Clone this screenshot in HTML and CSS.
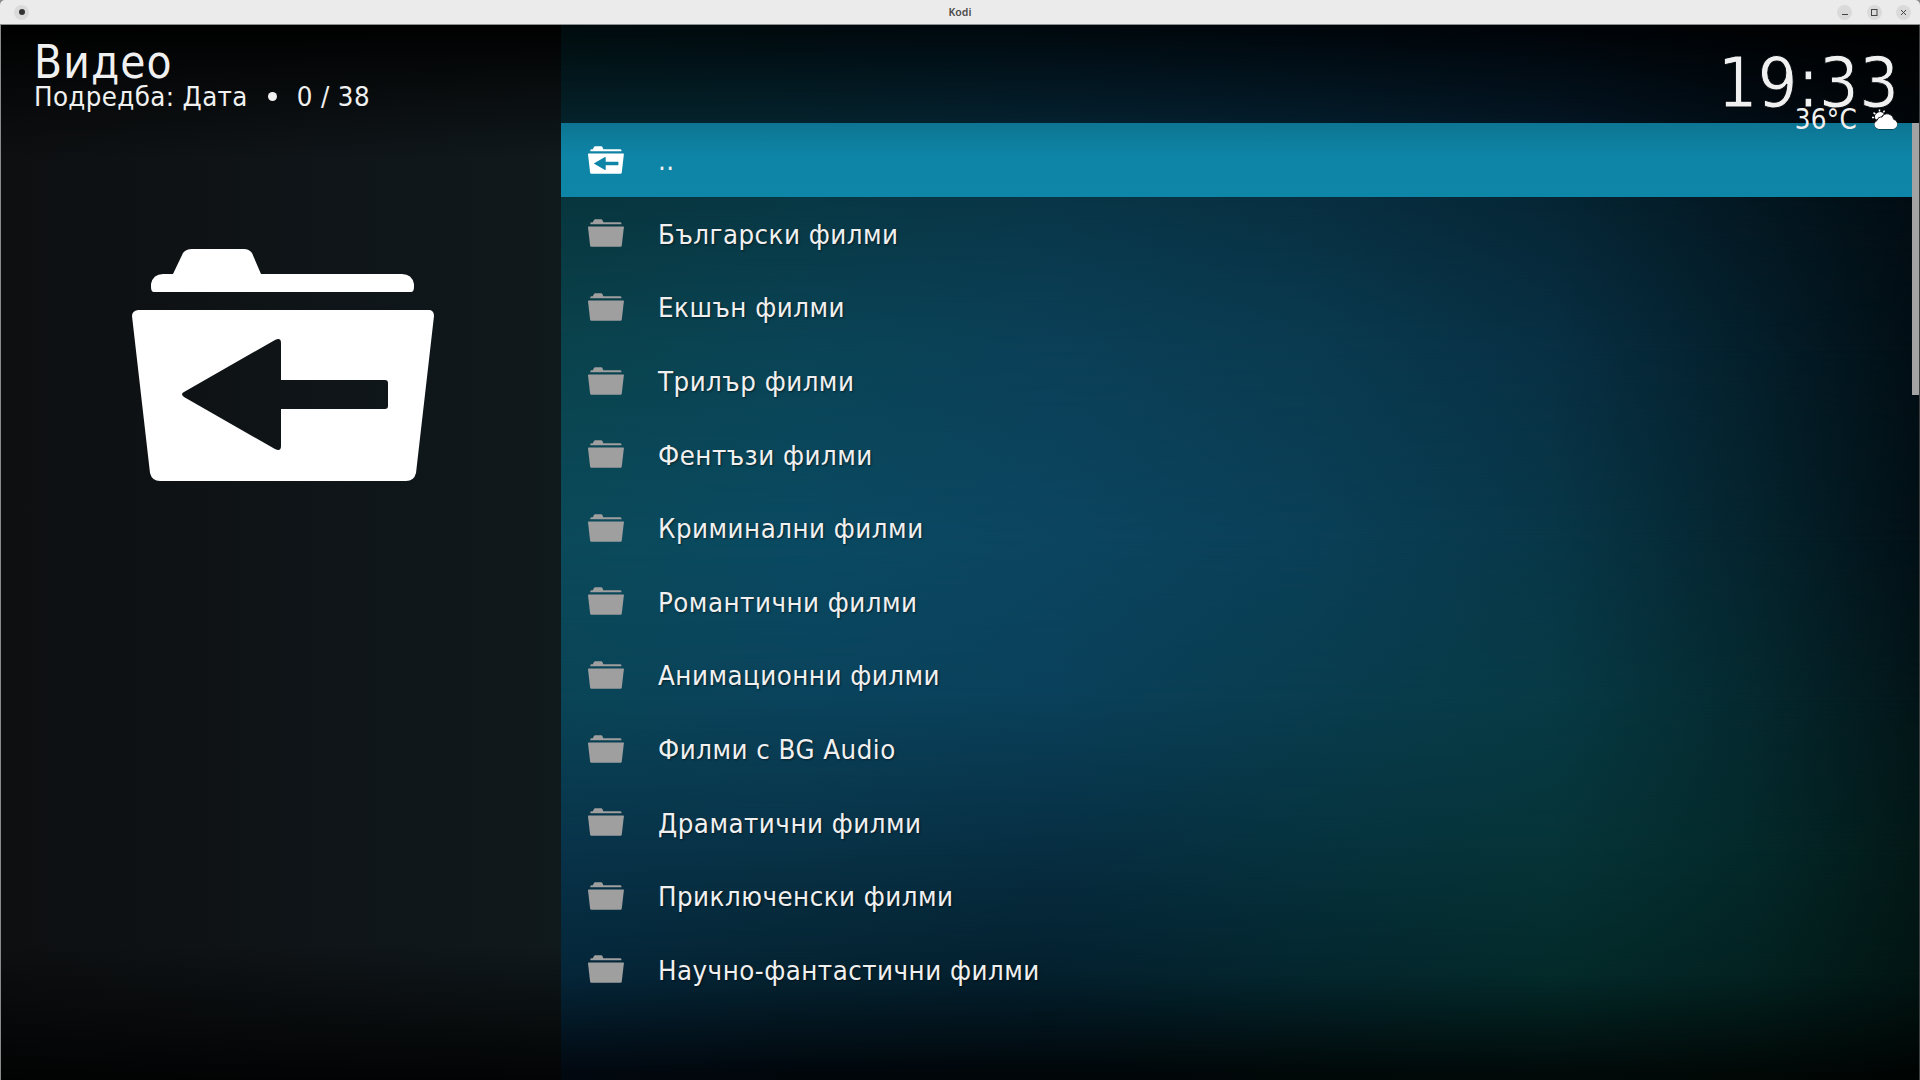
FILE: index.html
```html
<!DOCTYPE html>
<html lang="bg">
<head>
<meta charset="utf-8">
<title>Kodi</title>
<link rel="stylesheet" href="styles.css">
</head>
<body>
<svg class="defs" aria-hidden="true">
  <symbol id="folder" viewBox="0 0 303 234">
    <path d="M19 39V36Q21 26 31 26H41L51 5Q54 1 60 1H112Q117 1 120 5L129 26H270Q280 26 282 36V39Q282 44 279 44H22Q19 44 19 39Z"/>
    <path d="M6 62H298Q302 63 302 68L284 225Q282 233 274 233H28Q20 233 18 225L0 68Q0 63 6 62Z"/>
  </symbol>
  <symbol id="folder-back" viewBox="0 0 303 234">
    <path d="M19 39V36Q21 26 31 26H41L51 5Q54 1 60 1H112Q117 1 120 5L129 26H270Q280 26 282 36V39Q282 44 279 44H22Q19 44 19 39Z"/>
    <path fill-rule="evenodd" d="M6 62H298Q302 63 302 68L284 225Q282 233 274 233H28Q20 233 18 225L0 68Q0 63 6 62ZM52 144L143 92Q149 89 149 95V132H253Q256 132 256 135V158Q256 161 253 161H149V198Q149 204 143 201L52 149Q48 146 52 144Z"/>
  </symbol>
</svg>
<div class="window">
  <header class="titlebar">
    <span class="round menu"><i></i></span>
    <span class="caption">Kodi</span>
    <span class="controls">
      <svg class="round" viewBox="0 0 15 15"><path d="M5 9.5H11"/></svg>
      <svg class="round" viewBox="0 0 15 15"><rect x="4.5" y="4.5" width="5.5" height="6"/></svg>
      <svg class="round" viewBox="0 0 15 15"><path d="M5 5L10 10M10 5L5 10"/></svg>
    </span>
  </header>
  <main class="screen">
    <div class="backdrop"><i class="b1"></i><i class="b2"></i><i class="b3"></i><i class="b4"></i><i class="b5"></i><i class="b6"></i><i class="b7"></i><i class="b8"></i><i class="b9"></i></div>
    <aside class="side">
      <h1>Видео</h1>
      <p><span class="sort">Подредба: Дата</span><b></b><span class="count">0 / 38</span></p>
      <svg class="poster"><use href="#folder-back"/></svg>
    </aside>
    <ul class="list">
      <li class="active"><svg><use href="#folder-back"/></svg><span>..</span></li>
      <li><svg><use href="#folder"/></svg><span>Български филми</span></li>
      <li><svg><use href="#folder"/></svg><span>Екшън филми</span></li>
      <li><svg><use href="#folder"/></svg><span>Трилър филми</span></li>
      <li><svg><use href="#folder"/></svg><span>Фентъзи филми</span></li>
      <li><svg><use href="#folder"/></svg><span>Криминални филми</span></li>
      <li><svg><use href="#folder"/></svg><span>Романтични филми</span></li>
      <li><svg><use href="#folder"/></svg><span>Анимационни филми</span></li>
      <li><svg><use href="#folder"/></svg><span>Филми с BG Audio</span></li>
      <li><svg><use href="#folder"/></svg><span>Драматични филми</span></li>
      <li><svg><use href="#folder"/></svg><span>Приключенски филми</span></li>
      <li><svg><use href="#folder"/></svg><span>Научно-фантастични филми</span></li>
    </ul>
    <div class="scroll"><i></i></div>
    <div class="status">
      <div class="clock">19:33</div>
      <div class="weather"><span>36°C</span>
        <svg viewBox="0 0 26 20"><path fill="#fff" d="M3.4 9.5A5 5 0 0 1 12 4.6Q10 6 9.4 7.2Q6 7.4 5 10Z"/><g fill="none" stroke="#fff" stroke-width="1.5"><path d="M0 8H2.2M1.5 3.2L3.4 4.6M7.5 0V2M12.5 1.2L11.4 2.8"/></g><path fill="#fff" stroke="#01070b" stroke-width=".8" d="M7 19.5A4.6 4.6 0 0 1 5.2 10.8 4 4 0 0 1 10 7.6 6.2 6.2 0 0 1 21.6 9.8 5 5 0 0 1 21 19.5Z"/><path fill="#fff" d="M7 19.5A4.6 4.6 0 0 1 3 13H25A5 5 0 0 1 21 19.5Z"/></svg>
      </div>
    </div>
  </main>
</div>
</body>
</html>
```
FILE: styles.css
```css
* { box-sizing: border-box; }
body { margin: 0; background: #8a8a8a; overflow: hidden; }
.defs { position: absolute; width: 0; height: 0; }
.window {
  width: 1920px; height: 1080px;
  display: flex; flex-direction: column;
  font-family: "DejaVu Sans Condensed", "DejaVu Sans", sans-serif;
  font-stretch: condensed;
  color: #f0f0f0;
}
.titlebar {
  height: 25px; flex: none;
  display: grid; grid-template-columns: 1fr auto 1fr; align-items: center;
  padding: 0 9px 0 14px;
  background: #ebebeb;
  border-bottom: 1px solid #8c8f8f;
  border-radius: 5px 5px 0 0;
}
.round { width: 15px; height: 15px; border-radius: 50%; background: #dadada; }
.menu { display: grid; place-items: center; }
.menu i { width: 6px; height: 6px; border-radius: 50%; background: #333; }
.caption { font: 600 10.5px/24px "Noto Sans", sans-serif; color: #4a4a4a; margin-right: 5px; }
.controls { justify-self: end; display: flex; gap: 14.3px; }
.controls svg { fill: none; stroke: #444; stroke-width: 1; }

.screen {
  position: relative; flex: 1; min-height: 0;
  display: grid; grid-template-columns: 560px 1351px 7px;
  padding-left: 1px;
  border-right: 1px solid #3c4040;
}
.backdrop { position: absolute; inset: 0 0 0 1px; background: #000; }
.backdrop i {
  position: absolute; inset: 0;
  background: linear-gradient(90deg, var(--a) 560px, var(--b) 800px, var(--c) 1050px, var(--d) 1300px, var(--e) 1550px, var(--f) 1750px, var(--g) 1919px);
  -webkit-mask-image: linear-gradient(180deg, transparent var(--from), #000 var(--to));
  mask-image: linear-gradient(180deg, transparent var(--from), #000 var(--to));
}
.b1 { --from: -1px; --to: 0px; --a: #010b0d; --b: #01090d; --c: #01080d; --d: #01060b; --e: #000408; --f: #000203; --g: #000; }
.b2 { --from: 0px; --to: 95px; --a: #04222a; --b: #04222c; --c: #04202e; --d: #031c2a; --e: #031522; --f: #010c14; --g: #010508; }
.b3 { --from: 95px; --to: 175px; --a: #08363e; --b: #083845; --c: #093648; --d: #083042; --e: #062635; --f: #041822; --g: #020c12; }
.b4 { --from: 175px; --to: 325px; --a: #0a434d; --b: #0a4456; --c: #0b4058; --d: #0a3b50; --e: #083044; --f: #041f2b; --g: #020e14; }
.b5 { --from: 325px; --to: 515px; --a: #0b4a5a; --b: #0a4a62; --c: #0c4560; --d: #0a4058; --e: #083748; --f: #05242e; --g: #021016; }
.b6 { --from: 515px; --to: 675px; --a: #0a4456; --b: #0a435c; --c: #0a405a; --d: #093d4f; --e: #073a45; --f: #05292f; --g: #031518; }
.b7 { --from: 675px; --to: 825px; --a: #083349; --b: #083246; --c: #072e42; --d: #06323e; --e: #063438; --f: #04292a; --g: #031817; }
.b8 { --from: 825px; --to: 950px; --a: #052639; --b: #052331; --c: #04202e; --d: #04262e; --e: #042a2a; --f: #032221; --g: #021513; }
.b9 { --from: 950px; --to: 1050px; --a: #02080f; --b: #01060b; --c: #010609; --d: #010808; --e: #010a09; --f: #010806; --g: #000403; }

.side {
  position: relative;
  padding: 11px 0 0 33px;
  background:
    linear-gradient(180deg, #000 0, rgba(0,0,0,.55) 55px, transparent 135px, transparent 920px, rgba(0,0,0,.85) 1055px),
    linear-gradient(90deg, #0d0f11 0, #0f1518 60%, #10191c 100%);
}
h1 { margin: 0; font-weight: 400; font-size: 45.5px; line-height: 54px; letter-spacing: 1.1px; }
.side p { margin: -9.5px 0 0; display: flex; align-items: center; font-size: 27.4px; line-height: 32px; }
.sort, .count { letter-spacing: .36px; }
.side b { width: 9px; height: 9px; border-radius: 50%; background: #f0f0f0; margin: 0 20px 0 20px; }
.poster { display: block; width: 303px; height: 234px; margin: 135px 0 0 98px; fill: #fff; }

.list { position: relative; margin: 98px 0 0; padding: 0; list-style: none; }
.list li {
  height: 73.6px; padding-left: 27px;
  display: flex; align-items: center; gap: 34px;
  font-size: 27.4px; line-height: 32px; letter-spacing: .47px;
  text-shadow: 1px 1px 2px rgba(0,0,0,.5);
}
.list svg { width: 36px; height: 28px; fill: #a09f9f; }
.list span { position: relative; top: 1.5px; }
.list .active { background: linear-gradient(180deg, #0d7592 0, #0e84a6 32px, #0e86a8 100%); text-shadow: none; }
.active svg { fill: #fff; }
.scroll { position: relative; padding-top: 98px; }
.scroll i { display: block; height: 272px; background: #a3a3a3; }

.status { position: absolute; right: 20px; top: 18px; display: flex; flex-direction: column; align-items: flex-end; }
.clock { font-size: 70px; line-height: 80px; -webkit-text-stroke: .9px #01070b; }
.weather { display: flex; align-items: center; gap: 15px; font-size: 27.5px; line-height: 32px; letter-spacing: .3px; margin: -20px 1px 0 0; }
.weather svg { width: 26px; height: 21px; }
```
